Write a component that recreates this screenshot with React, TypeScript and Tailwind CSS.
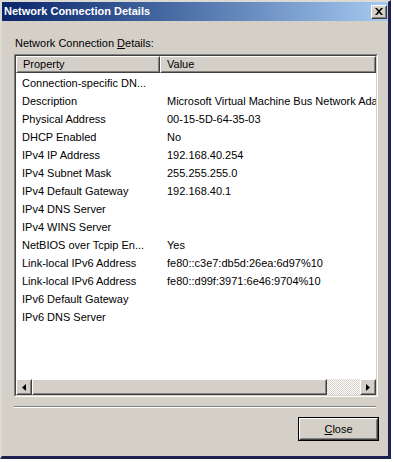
import React from 'react'

const rows: [string, string][] = [
  ['Connection-specific DN...', ''],
  ['Description', 'Microsoft Virtual Machine Bus Network Adapter'],
  ['Physical Address', '00-15-5D-64-35-03'],
  ['DHCP Enabled', 'No'],
  ['IPv4 IP Address', '192.168.40.254'],
  ['IPv4 Subnet Mask', '255.255.255.0'],
  ['IPv4 Default Gateway', '192.168.40.1'],
  ['IPv4 DNS Server', ''],
  ['IPv4 WINS Server', ''],
  ['NetBIOS over Tcpip En...', 'Yes'],
  ['Link-local IPv6 Address', 'fe80::c3e7:db5d:26ea:6d97%10'],
  ['Link-local IPv6 Address', 'fe80::d99f:3971:6e46:9704%10'],
  ['IPv6 Default Gateway', ''],
  ['IPv6 DNS Server', ''],
]

// raised 3D box, classic style
const Raised: React.FC<{ className?: string; children?: React.ReactNode }> = ({ className = '', children }) => (
  <div className={`border border-t-white border-l-white border-r-[#404040] border-b-[#404040] bg-[#d4d0c8] ${className}`}>
    <div className="h-full w-full border border-t-[#d4d0c8] border-l-[#d4d0c8] border-r-[#808080] border-b-[#808080] flex items-center justify-center">
      {children}
    </div>
  </div>
)

const App: React.FC = () => {
  return (
    <div className="w-[394px] h-[462px] bg-white" style={{ fontFamily: '"Liberation Sans", Arial, sans-serif' }}>
      <div className="w-[391px] h-[459px] flex flex-col bg-[#d4d0c8] border-t-2 border-l-2 border-r-[3px] border-b-[3px] border-t-[#dcdad4] border-l-[#dcdad4] border-r-[#1c2150] border-b-[#1c2150]">
        {/* Title bar */}
        <div className="h-[19px] flex items-center justify-between bg-gradient-to-r from-[#0a246a] to-[#a6caf0] pl-[2px] pr-[1px]">
          <span className="text-[11px] font-bold text-white leading-none">Network Connection Details</span>
          <Raised className="w-[16px] h-[14px]">
            <svg width="8" height="7" viewBox="0 0 8 7">
              <path d="M0 0h2l2 2.2L6 0h2L5 3.5 8 7H6L4 4.8 2 7H0l3-3.5z" fill="#000" />
            </svg>
          </Raised>
        </div>

        {/* Body */}
        <div className="flex-1 flex flex-col pl-[12px] pr-[10px] pt-[16px] text-[11px] text-black">
          <div className="pl-[1px] h-[13px] leading-[13px]">
            Network Connection <span className="underline">D</span>etails:
          </div>

          {/* List view */}
          <div className="mt-[4px] h-[343px] border border-t-[#808080] border-l-[#808080] border-r-white border-b-white">
            <div className="h-full flex flex-col bg-white border border-t-[#404040] border-l-[#404040] border-r-[#d4d0c8] border-b-[#d4d0c8] overflow-hidden">
              <div className="flex h-[17px] shrink-0">
                <Raised className="w-[144px] h-full">
                  <span className="w-full pl-[5px] leading-none">Property</span>
                </Raised>
                <Raised className="flex-1 h-full">
                  <span className="w-full pl-[5px] leading-none">Value</span>
                </Raised>
              </div>
              <div className="flex-1 pt-[1px]">
                {rows.map(([prop, value], i) => (
                  <div key={i} className="flex h-[18px] items-center whitespace-nowrap">
                    <div className="w-[144px] shrink-0 pl-[6px]">{prop}</div>
                    <div className="pl-[7px]">{value}</div>
                  </div>
                ))}
              </div>
              {/* horizontal scrollbar */}
              <div className="flex h-[16px] shrink-0">
                <Raised className="w-[16px] h-full">
                  <svg width="4" height="7" viewBox="0 0 4 7"><path d="M4 0v7L0 3.5z" fill="#000" /></svg>
                </Raised>
                <Raised className="w-[295px] h-full" />
                <div className="flex-1 h-full bg-[repeating-conic-gradient(#ffffff_0_25%,#d4d0c8_0_50%)] bg-[length:2px_2px]" />
                <Raised className="w-[16px] h-full">
                  <svg width="4" height="7" viewBox="0 0 4 7"><path d="M0 0v7L4 3.5z" fill="#000" /></svg>
                </Raised>
              </div>
            </div>
          </div>

          {/* separator */}
          <div className="mt-[9px] mr-[2px] border-t border-t-[#808080] border-b border-b-white" />

          <div className="mt-[9px] flex justify-end pr-[-1px]">
            <div className="w-[81px] h-[24px] border border-black -mr-[1px]">
              <Raised className="h-full w-full">
                <span><span className="underline">C</span>lose</span>
              </Raised>
            </div>
          </div>
        </div>
      </div>
    </div>
  )
}

export default App
